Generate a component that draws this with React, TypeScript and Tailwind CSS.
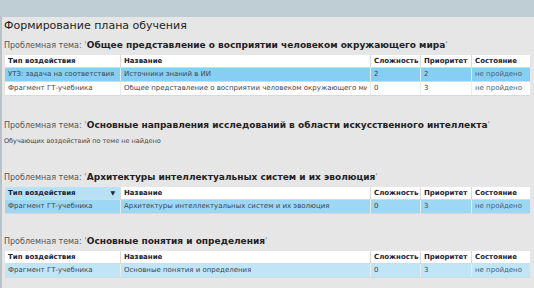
import React from 'react';

type Row = { type: string; name: string; diff: string; prio: string; state: string; tone: 'white' | 'blue' | 'sky' | 'pale' };

type Topic = {
  title: string;
  rows: Row[];
  sortedFirst?: boolean;
  gapTop: string;
};

const topics: Topic[] = [
  {
    title: 'Общее представление о восприятии человеком окружающего мира',
    gapTop: 'mt-[0px]',
    rows: [
      { type: 'УТЗ: задача на соответствия', name: 'Источники знаний в ИИ', diff: '2', prio: '2', state: 'не пройдено', tone: 'blue' },
      { type: 'Фрагмент ГТ-учебника', name: 'Общее представление о восприятии человеком окружающего мира', diff: '0', prio: '3', state: 'не пройдено', tone: 'white' },
    ],
  },
  { title: 'Основные направления исследований в области искусственного интеллекта', gapTop: 'mt-[19px]', rows: [] },
  {
    title: 'Архитектуры интеллектуальных систем и их эволюция',
    gapTop: 'mt-[21px]',
    sortedFirst: true,
    rows: [
      { type: 'Фрагмент ГТ-учебника', name: 'Архитектуры интеллектуальных систем и их эволюция', diff: '0', prio: '3', state: 'не пройдено', tone: 'sky' },
    ],
  },
  {
    title: 'Основные понятия и определения',
    gapTop: 'mt-[17px]',
    rows: [
      { type: 'Фрагмент ГТ-учебника', name: 'Основные понятия и определения', diff: '0', prio: '3', state: 'не пройдено', tone: 'pale' },
    ],
  },
];

const toneClass: Record<Row['tone'], string> = {
  white: 'bg-white',
  blue: 'bg-[#86cef3]',
  sky: 'bg-[#9dd7f3]',
  pale: 'bg-[#bfe5f6]',
};

const cols = 'grid grid-cols-[115px_250px_50px_51px_61px]';

const PlanTable: React.FC<{ rows: Row[]; sortedFirst?: boolean }> = ({ rows, sortedFirst }) => (
  <div className="mt-[4px] mr-[4px] ml-[1px] text-[7px] leading-none font-['DejaVu_Sans',sans-serif]">
    <div className={`${cols} h-[13px] bg-white font-bold text-[#223] border-b border-[#d4dadd]`}>
      <div className={`flex items-center justify-between px-[3px] ${sortedFirst ? 'bg-[#b7e2f6]' : ''}`}>
        <span>Тип воздействия</span>
        {sortedFirst && <span className="text-[6px] mr-[2px]">▼</span>}
      </div>
      <div className="flex items-center px-[3px] border-l border-[#d4dadd]">Название</div>
      <div className="flex items-center px-[3px] border-l border-[#d4dadd]">Сложность</div>
      <div className="flex items-center px-[3px] border-l border-[#d4dadd]">Приоритет</div>
      <div className="flex items-center px-[3px] border-l border-[#d4dadd]">Состояние</div>
    </div>
    {rows.map((r, i) => (
      <div key={i} className={`${cols} h-[14px] ${toneClass[r.tone]} text-[#3c4550] border-b border-[#d4dadd]`}>
        <div className="flex items-center px-[3px] overflow-hidden whitespace-nowrap">{r.type}</div>
        <div className="min-w-0 flex items-center px-[3px] overflow-hidden whitespace-nowrap border-l border-[#e6eef2]">
          <span className="block overflow-hidden">{r.name}</span>
        </div>
        <div className="flex items-center px-[3px] border-l border-[#e6eef2]">{r.diff}</div>
        <div className="flex items-center px-[3px] border-l border-[#e6eef2]">{r.prio}</div>
        <div className="flex items-center px-[3px] border-l border-[#e6eef2] text-[#4a6478]">{r.state}</div>
      </div>
    ))}
  </div>
);

export default function App() {
  return (
    <div className="w-[534px] h-[288px] overflow-hidden bg-[#bfcdd4] font-['DejaVu_Sans',sans-serif]">
      <div className="h-[17px]" />
      <div className="h-[271px] bg-[#e6e6e6] border-l-[2px] border-[#b9c2c7] pl-[2px]">
        <h1 className="pt-[1px] h-[18px] leading-[16px] text-[11px] text-[#1e1e1e]">Формирование плана обучения</h1>
        {topics.map((t, i) => (
          <div key={i} className={t.gapTop}>
            <div className="h-[16px] leading-[16px] whitespace-nowrap text-[#222]">
              <span className="text-[8px] text-[#555]">Проблемная тема: </span>
              <span className="text-[9px] text-[#888]">'</span>
              <span className="text-[9px] font-bold">{t.title}</span>
              <span className="text-[9px] text-[#888]">'</span>
            </div>
            {t.rows.length > 0 ? (
              <PlanTable rows={t.rows} sortedFirst={t.sortedFirst} />
            ) : (
              <div className="mt-[5px] h-[10px] leading-[10px] text-[6.5px] text-[#444]">Обучающих воздействий по теме не найдено</div>
            )}
          </div>
        ))}
      </div>
    </div>
  );
}
